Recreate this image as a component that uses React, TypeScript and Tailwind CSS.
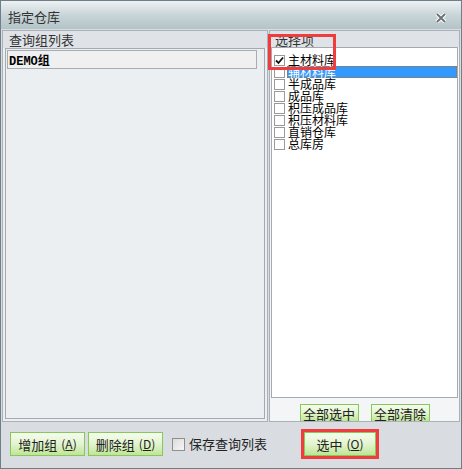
import React from "react";

const font = { fontFamily: '"Noto Sans CJK SC", "Noto Sans", sans-serif' };

const stores = ["主材料库", "辅材料库", "半成品库", "成品库", "积压成品库", "积压材料库", "直销仓库", "总库房"];

// green glossy button used throughout the dialog
const GreenButton = ({ children, className = "" }: { children: React.ReactNode; className?: string }) => (
  <div
    className={`flex items-center justify-center border border-[#86c95a] bg-gradient-to-b from-[#f6fcee] via-[#e2f4cf] to-[#bfe596] text-[13px] leading-none text-[#222] ${className}`}
  >
    {children}
  </div>
);

const Hotkey = ({ k }: { k: string }) => (
  <span className="ml-[4px] text-[12px]">
    (<span className="underline">{k}</span>)
  </span>
);

const Box = ({ checked }: { checked?: boolean }) => (
  <div className="relative h-[11px] w-[11px] shrink-0 border border-[#9a9a9a] bg-white">
    {checked && (
      <svg viewBox="0 0 11 11" className="absolute -left-px -top-px h-[11px] w-[11px]">
        <path d="M2 5.5 L4.5 8 L9 2.5" fill="none" stroke="#111" strokeWidth="1.8" />
      </svg>
    )}
  </div>
);

export default function App() {
  return (
    <div className="relative flex h-[469px] w-[462px] flex-col border border-[#6f7f88] bg-[#d9dde1]" style={font}>
      {/* Title bar */}
      <div className="flex h-[28px] shrink-0 items-center justify-between bg-gradient-to-b from-[#eef1f3] via-[#c9d5d8] to-[#b3c4c8] pl-[7px] pr-[14px]">
        <span className="pt-[4px] text-[13px] text-[#333]">指定仓库</span>
        <svg viewBox="0 0 12 10" className="mt-[6px] h-[10px] w-[12px]">
          <path d="M2 1 L10 9 M10 1 L2 9" stroke="#fff" strokeWidth="4" />
          <path d="M2 1 L10 9 M10 1 L2 9" stroke="#6d7478" strokeWidth="2" />
        </svg>
      </div>

      {/* Panels */}
      <div className="flex h-[393px] shrink-0 gap-[1px] px-[1px] pt-[1px]">
        <div className="flex w-[266px] flex-col border border-[#aab1b7] bg-[#eceff2]">
          <div className="h-[17px] bg-[#dfe3e7] pl-[6px] text-[13px] leading-[17px] text-[#333]">查询组列表</div>
          <div className="mx-[2px] mb-[2px] flex-1 border border-[#a3aab0] bg-[#eceff2] p-[1px]">
            <div className="h-[19px] w-[250px] border border-[#a7adb2] bg-[#f0f0f0] pl-[1px] text-[12px] font-bold leading-[18px] text-black">
              <span style={{ fontFamily: '"Liberation Mono", "Noto Sans CJK SC", monospace' }}>DEMO组</span>
            </div>
          </div>
        </div>

        <div className="flex flex-1 flex-col border border-[#aab1b7] bg-[#f3f5f7]">
          <div className="h-[16px] bg-[#dfe3e7] pl-[5px] text-[13px] leading-[17px] text-[#333]">选择项</div>
          <div className="mx-[1px] h-[351px] border border-[#a3aab0] bg-white pl-[2px] pt-[6px]">
            {stores.map((s, i) => (
              <div key={s} className="flex h-[12px] items-center">
                <Box checked={i === 0} />
                {i === 1 ? (
                  <div className="ml-[2px] flex h-[12px] flex-1 items-center border border-dotted border-[#b5701c] bg-[#3399ff] text-[12px] leading-none text-white">
                    {s}
                  </div>
                ) : (
                  <span className="ml-[3px] text-[12px] leading-none text-black">{s}</span>
                )}
              </div>
            ))}
          </div>
          <div className="mt-auto flex justify-center gap-[12px]">
            <GreenButton className="h-[17px] w-[59px] border-b-0">全部选中</GreenButton>
            <GreenButton className="h-[17px] w-[59px] border-b-0">全部清除</GreenButton>
          </div>
        </div>
      </div>

      {/* Footer */}
      <div className="flex flex-1 items-center pb-[2px] pl-[9px]">
        <GreenButton className="h-[24px] w-[75px]">
          增加组<Hotkey k="A" />
        </GreenButton>
        <GreenButton className="ml-[3px] h-[24px] w-[75px]">
          删除组<Hotkey k="D" />
        </GreenButton>
        <div className="ml-[9px] flex items-center gap-[4px]">
          <div className="h-[13px] w-[13px] border border-[#8e8e8e] bg-gradient-to-br from-[#dcdcdc] to-[#f6f6f6]" />
          <span className="text-[13px] text-[#222]">保存查询列表</span>
        </div>
        <div className="ml-[34px] border-[3px] border-[#f03c3c] p-0">
          <GreenButton className="h-[24px] w-[72px]">
            选中<Hotkey k="O" />
          </GreenButton>
        </div>
      </div>

      {/* red marker round the options header */}
      <div className="pointer-events-none absolute left-[267px] top-[33px] h-[36px] w-[68px] border-[3px] border-[#f03c3c]" />
    </div>
  );
}
